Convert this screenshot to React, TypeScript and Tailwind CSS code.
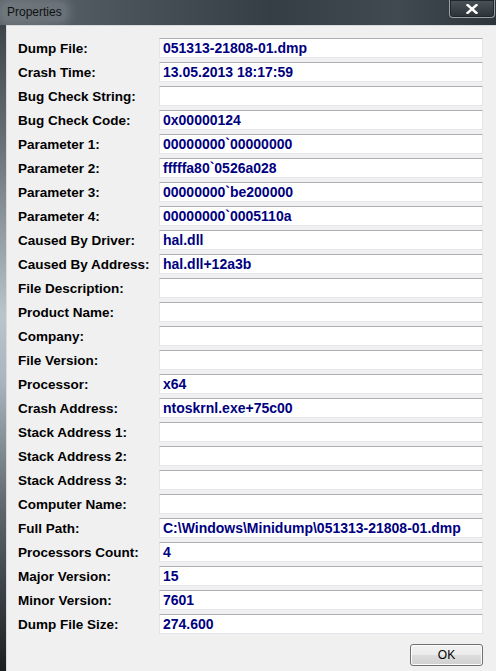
import React from 'react';

const rows: [string, string][] = [
  ['Dump File:', '051313-21808-01.dmp'],
  ['Crash Time:', '13.05.2013 18:17:59'],
  ['Bug Check String:', ''],
  ['Bug Check Code:', '0x00000124'],
  ['Parameter 1:', '00000000`00000000'],
  ['Parameter 2:', 'fffffa80`0526a028'],
  ['Parameter 3:', '00000000`be200000'],
  ['Parameter 4:', '00000000`0005110a'],
  ['Caused By Driver:', 'hal.dll'],
  ['Caused By Address:', 'hal.dll+12a3b'],
  ['File Description:', ''],
  ['Product Name:', ''],
  ['Company:', ''],
  ['File Version:', ''],
  ['Processor:', 'x64'],
  ['Crash Address:', 'ntoskrnl.exe+75c00'],
  ['Stack Address 1:', ''],
  ['Stack Address 2:', ''],
  ['Stack Address 3:', ''],
  ['Computer Name:', ''],
  ['Full Path:', 'C:\\Windows\\Minidump\\051313-21808-01.dmp'],
  ['Processors Count:', '4'],
  ['Major Version:', '15'],
  ['Minor Version:', '7601'],
  ['Dump File Size:', '274.600'],
];

export default function App() {
  return (
    <div className="w-[496px] h-[671px] overflow-hidden bg-[linear-gradient(90deg,#5f676d_0%,#4a535a_25%,#353e45_55%,#414a51_80%,#2e363c_100%)] font-['Liberation_Sans',Arial,sans-serif] flex flex-col">
      {/* Title bar */}
      <div className="h-[25px] shrink-0 flex items-start justify-between">
        <div className="ml-[3px] mt-[3px] px-[4px] h-[18px] flex items-center rounded-[6px] bg-[#8a9298]/40 shadow-[0_0_8px_4px_rgba(150,158,164,0.35)]">
          <span className="text-[12px] leading-none text-[#111]">Properties</span>
        </div>
        <div className="w-[46px] h-[18px] mr-[1px] rounded-b-[4px] border border-t-0 border-[#9aa1a6] bg-[linear-gradient(180deg,#4b535a,#2b3238)] shadow-[inset_0_0_0_1px_#20262b] flex items-center justify-center">
          <svg width="12" height="10" viewBox="0 0 12 10">
            <path d="M1.5 1 L10.5 9 M10.5 1 L1.5 9" stroke="#ffffff" strokeWidth="2.4" strokeLinecap="square" />
          </svg>
        </div>
      </div>

      {/* Body */}
      <div className="flex-1 flex">
        <div className="w-[6px] shrink-0 bg-[linear-gradient(180deg,#3d454b_0%,#6c757b_20%,#b9c4cb_45%,#aab5bd_55%,#5d666c_75%,#1a1e21_100%)]" />
        <div className="flex-1 bg-[#f0f0f0] border-l border-t border-[#d8dadc] pl-[11px] pt-[12px] pr-[13px]">
          <div className="flex flex-col gap-[4px]">
            {rows.map(([label, value]) => (
              <div key={label} className="flex items-center h-[20px]">
                <div className="w-[141px] shrink-0 pt-[2px] text-[13.5px] font-bold text-black leading-none whitespace-nowrap">
                  {label}
                </div>
                <div className="flex-1 h-[20px] bg-white border border-[#e2e5ea] border-t-[#acaeb4] pl-[3px] flex items-center">
                  <span className="text-[14px] font-bold text-[#000080] leading-none whitespace-nowrap">{value}</span>
                </div>
              </div>
            ))}
          </div>
          <div className="flex justify-end mt-[10px]">
            <button className="w-[73px] h-[22px] rounded-[3px] border border-[#707070] bg-[linear-gradient(180deg,#f2f2f2_0%,#ebebeb_50%,#dddddd_50%,#cfcfcf_100%)] shadow-[inset_0_0_0_1px_#fcfcfc] text-[12px] text-black leading-none">
              OK
            </button>
          </div>
        </div>
      </div>
    </div>
  );
}
